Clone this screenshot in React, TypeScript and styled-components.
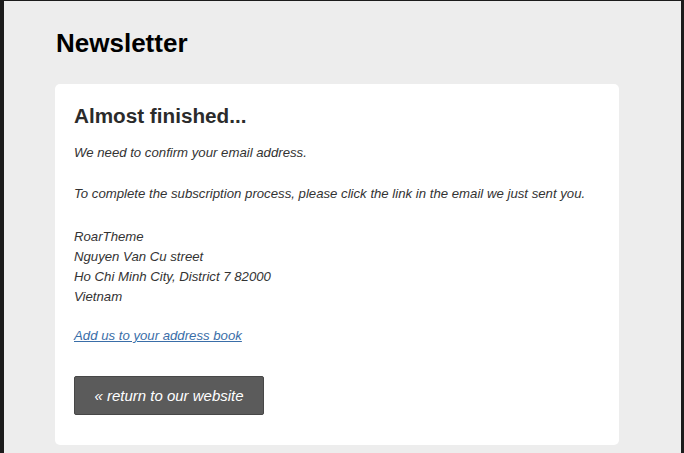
import React, { ReactElement } from "react";
import styled, { createGlobalStyle } from "styled-components";

const GlobalStyle = createGlobalStyle`
    html, body {
        margin: 0;
        padding: 0;
        height: 100%;
        background: #ededed;
    }
    #root {
        height: 100%;
    }
`;

const Frame = styled.div`
    box-sizing: border-box;
    height: 100%;
    background-color: #ededed;
    border-style: solid;
    border-color: #1b1b1b;
    border-width: 1px 3px 0 4px;
    font-family: "Liberation Sans", Arial, sans-serif;
    overflow: hidden;
`;

const Page = styled.div`
    width: 564px;
    margin-left: 51px;
    padding-top: 25px;
`;

const Title = styled.h1`
    margin: 0 0 24px 1px;
    font-size: 26px;
    line-height: 34px;
    font-weight: bold;
    color: #000;
`;

const Card = styled.div`
    background-color: #fff;
    border-radius: 5px;
    padding: 18px 19px 30px;
    color: #333;
`;

const Heading = styled.h2`
    margin: 0 0 13px;
    font-size: 20.7px;
    line-height: 28px;
    font-weight: bold;
    color: #2b2b2b;
`;

const Text = styled.p<{ $gap?: number }>`
    margin: 0 0 ${(props) => props.$gap ?? 21}px;
    font-size: 13.2px;
    line-height: 20px;
    font-style: italic;
    color: #333;
`;

const Link = styled.a`
    color: #3a6ea8;
    text-decoration: underline;
    cursor: pointer;
`;

const Button = styled.a`
    display: inline-block;
    margin-top: 9px;
    box-sizing: border-box;
    width: 190px;
    height: 39px;
    line-height: 37px;
    text-align: center;
    background-color: #5b5b5b;
    border: 1px solid #474747;
    border-radius: 2px;
    color: #fff;
    font-size: 15px;
    font-style: italic;
    text-decoration: none;
    cursor: pointer;
    vertical-align: top;
`;

const App: React.FC<{}> = (): ReactElement => {
    return (
        <Frame>
            <GlobalStyle />
            <Page>
                <Title>Newsletter</Title>
                <Card>
                    <Heading>Almost finished...</Heading>
                    <Text>We need to confirm your email address.</Text>
                    <Text $gap={23}>To complete the subscription process, please click the link in the email we just sent you.</Text>
                    <Text $gap={19}>
                        RoarTheme<br />
                        Nguyen Van Cu street<br />
                        Ho Chi Minh City, District 7 82000<br />
                        Vietnam
                    </Text>
                    <Text>
                        <Link>Add us to your address book</Link>
                    </Text>
                    <Button>« return to our website</Button>
                </Card>
            </Page>
        </Frame>
    );
};

export default App;
